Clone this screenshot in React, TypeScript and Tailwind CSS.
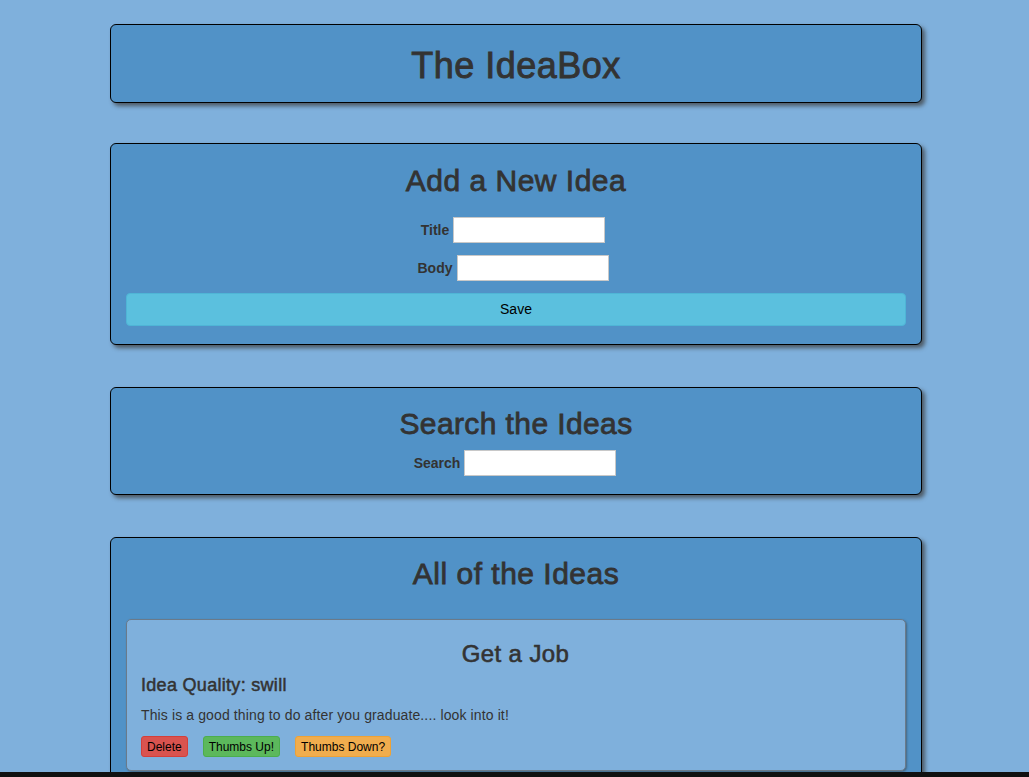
import React from "react";

const card =
  "w-[812px] ml-[110px] bg-[#5192c7] border border-black rounded-[6px] shadow-[3px_3px_4px_rgba(60,60,60,0.75)]";

function Field({ label }: { label: string }) {
  return (
    <div className="flex items-center justify-center gap-[4px]">
      <label className="text-[14px] font-bold text-[#333]">{label}</label>
      <input
        type="text"
        className="w-[152px] h-[26px] bg-white border border-[#c8c8c8] outline-none"
      />
    </div>
  );
}

export default function App() {
  return (
    <div
      className="h-[777px] overflow-hidden bg-[#7fb0dc] flex flex-col text-[#333]"
      style={{ fontFamily: '"Liberation Sans", Arial, sans-serif' }}
    >
      <div className="flex-1 overflow-hidden pt-[24px]">
        {/* Header */}
        <div className={`${card} h-[79px] pt-[4px] flex items-center justify-center`}>
          <h1 className="text-[36px] leading-[40px] tracking-[0.5px] [-webkit-text-stroke:0.9px_#333]">
            The IdeaBox
          </h1>
        </div>

        {/* Add a new idea */}
        <div className={`${card} mt-[40px] pt-[20px] px-[15px] pb-[18px]`}>
          <h2 className="text-[30px] leading-[33px] text-center tracking-[0.5px] [-webkit-text-stroke:0.8px_#333]">
            Add a New Idea
          </h2>
          <div className="mt-[20px] pr-[6px] flex flex-col gap-[12px]">
            <Field label="Title" />
            <Field label="Body" />
          </div>
          <button className="mt-[12px] w-full h-[33px] bg-[#5bc0de] border border-[#4fb5d6] rounded-[4px] text-[14px] text-black">
            Save
          </button>
        </div>

        {/* Search */}
        <div className={`${card} mt-[42px] pt-[19px] px-[15px] pb-[18px]`}>
          <h2 className="text-[30px] leading-[33px] text-center tracking-[0.4px] [-webkit-text-stroke:0.8px_#333]">
            Search the Ideas
          </h2>
          <div className="mt-[10px] pr-[2px]">
            <Field label="Search" />
          </div>
        </div>

        {/* All ideas */}
        <div className={`${card} mt-[42px] pt-[19px] px-[15px] pb-[18px]`}>
          <h2 className="text-[30px] leading-[33px] text-center tracking-[0.5px] [-webkit-text-stroke:0.8px_#333]">
            All of the Ideas
          </h2>
          <div className="mt-[29px] bg-[#7fb0dc] border border-[#6a7a8a] rounded-[5px] shadow-[1px_1px_2px_rgba(60,60,60,0.5)] pt-[21px] pl-[14px] pr-[15px] pb-[13px]">
            <h3 className="text-[24px] leading-[26px] text-center tracking-[0.4px] [-webkit-text-stroke:0.6px_#333]">
              Get a Job
            </h3>
            <h4 className="mt-[8px] text-[18px] leading-[20px] tracking-[0.3px] [-webkit-text-stroke:0.5px_#333]">
              Idea Quality: swill
            </h4>
            <p className="mt-[10px] text-[14px] leading-[20px] tracking-[0.12px]">
              This is a good thing to do after you graduate.... look into it!
            </p>
            <div className="mt-[11px] flex gap-[15px]">
              <button className="h-[21px] px-[5px] text-[12px] leading-[18px] text-black bg-[#d9534f] border border-[#d43f3a] rounded-[3px]">
                Delete
              </button>
              <button className="h-[21px] px-[5px] text-[12px] leading-[18px] text-black bg-[#5cb85c] border border-[#4cae4c] rounded-[3px]">
                Thumbs Up!
              </button>
              <button className="h-[21px] px-[5px] text-[12px] leading-[18px] text-black bg-[#f0ad4e] border border-[#eea236] rounded-[3px]">
                Thumbs Down?
              </button>
            </div>
          </div>
        </div>
      </div>
      <div className="h-[5px] bg-[#111]" />
    </div>
  );
}
